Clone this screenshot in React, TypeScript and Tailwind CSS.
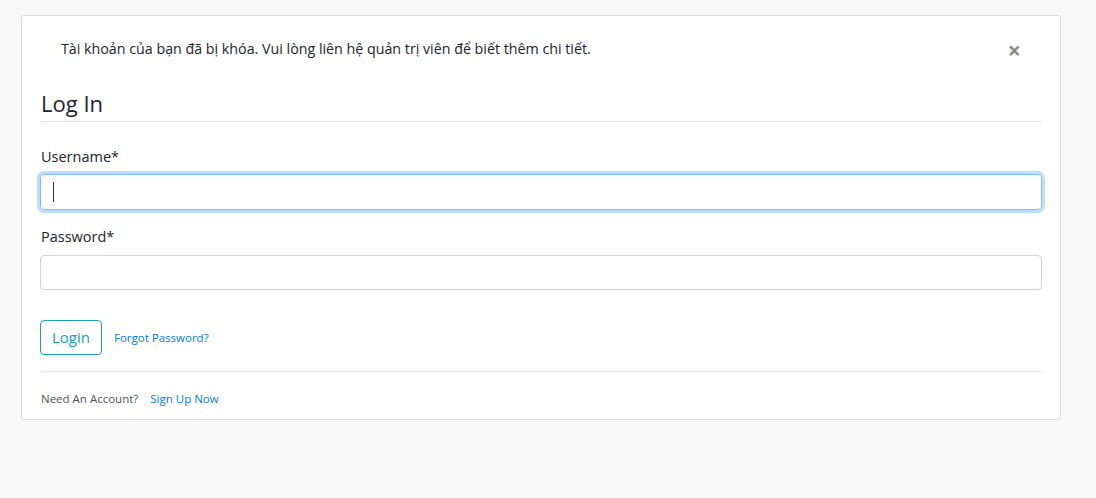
import React from "react";

export default function App() {
  return (
    <div
      className="min-h-[498px] w-full bg-[#f8f8f8] pt-[15px] pl-[21px] pr-[35px]"
      style={{ fontFamily: '"Open Sans", "Noto Sans", sans-serif' }}
    >
      <div className="w-[1040px] rounded-[3px] border border-[#dcdcdc] bg-white px-[19px] pb-[11px] pt-[21px]">
        <div className="relative flex h-[24px] items-center pl-[20px] pr-[60px] text-[14.25px] text-[#212529]">
          <span>Tài khoản của bạn đã bị khóa. Vui lòng liên hệ quản trị viên để biết thêm chi tiết.</span>
          <button className="absolute right-[20px] top-[2px] text-[23px] font-bold leading-none text-[#8a8a8a]">
            ×
          </button>
        </div>
        <div className="mt-[27px] border-b border-[#e0e0e0] pb-[3px] text-[22px] leading-[30px] text-[#212529]">
          Log In
        </div>
        <div className="mt-[24px] text-[14.5px] leading-[22px] text-[#212529]">Username*</div>
        <div className="mt-[6px] mx-[-1px] flex h-[36px] items-center rounded-[4px] border border-[#80bdff] px-[12px] shadow-[0_0_0_3px_rgba(0,123,255,0.25)]">
          <div className="h-[20px] w-px bg-[#333]" />
        </div>
        <div className="mt-[16px] text-[14.5px] leading-[22px] text-[#212529]">Password*</div>
        <div className="mt-[7px] mx-[-1px] h-[35px] rounded-[4px] border border-[#ced4da]" />
        <div className="mt-[30px] flex items-center">
          <button className="ml-[-1px] h-[35px] w-[62px] rounded-[4px] border border-[#17a2b8] text-[15px] text-[#17a2b8]">
            Login
          </button>
          <span className="ml-[12px] text-[11.5px] text-[#007bff]">Forgot Password?</span>
        </div>
        <div className="mt-[16px] border-t border-[#e0e0e0]" />
        <div className="mt-[18px] flex items-center text-[11.5px] leading-[18px]">
          <span className="text-[#555]">Need An Account?</span>
          <span className="ml-[12px] text-[#007bff]">Sign Up Now</span>
        </div>
      </div>
    </div>
  );
}
